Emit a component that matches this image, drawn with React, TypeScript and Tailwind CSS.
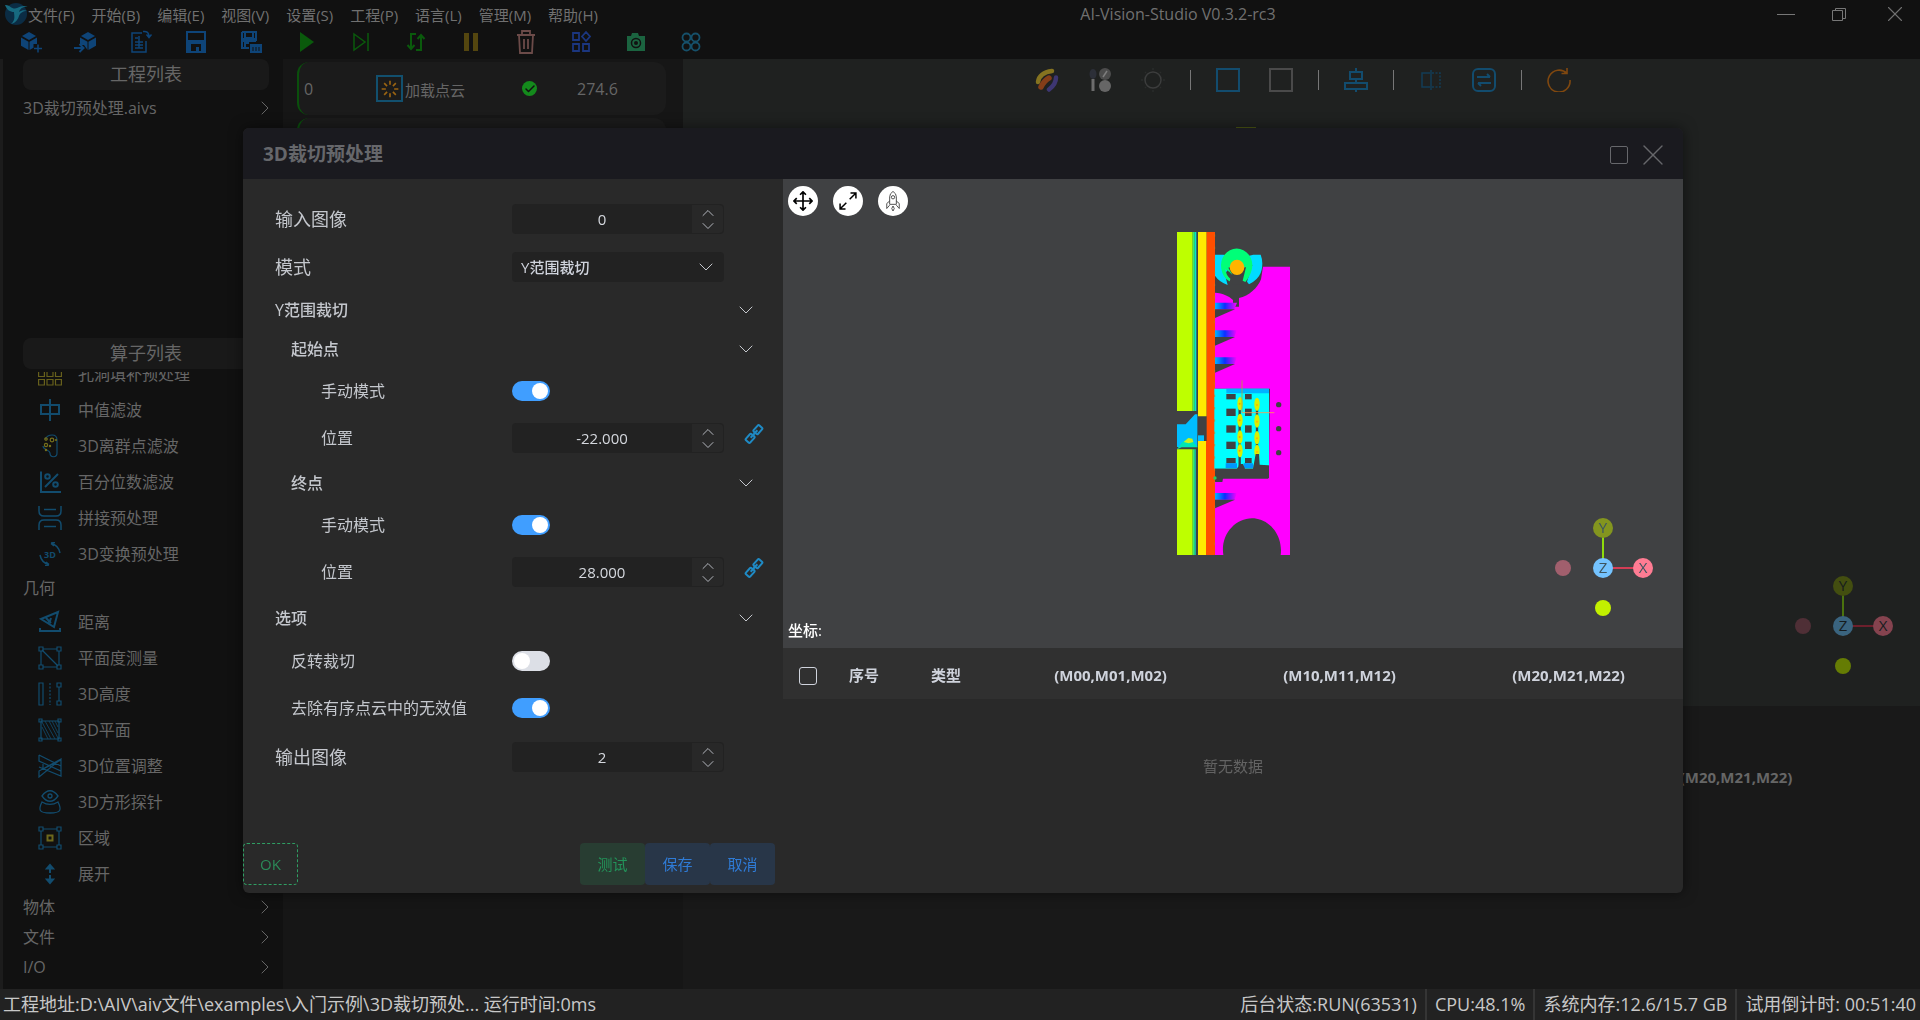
import React, { useState } from "react";
import { ChevronDown, ChevronRight, ChevronUp, Check, X } from "lucide-react";

type IconProps = { children: React.ReactNode; size?: string; color?: string; box?: string; sw?: number };

function Icon({ children, size = "size-6", color = "text-[#124c6e]", box = "0 0 24 24", sw = 1.5 }: IconProps) {
  return (
    <svg viewBox={box} className={`${size} ${color} shrink-0`} fill="none" stroke="currentColor" strokeWidth={sw} aria-hidden="true">
      {children}
    </svg>
  );
}

const menus = ["文件(F)", "开始(B)", "编辑(E)", "视图(V)", "设置(S)", "工程(P)", "语言(L)", "管理(M)", "帮助(H)"];

const blue = "text-[#0e4478]";
const green = "text-[#0a5a0c]";

const tools: { name: string; icon: React.ReactNode }[] = [
  {
    name: "新建工程",
    icon: (
      <Icon color={blue}>
        <path d="M10 2l7 4-7 4-7-4zM2 7.500l7.500 4.300V20L2 15.800zM18 7.500l-7.500 4.300V20l4-2.300V14H18z" fill="currentColor" stroke="none" />
        <path d="M19 14.500v8M15 18.500h8" />
      </Icon>
    ),
  },
  {
    name: "打开工程",
    icon: (
      <Icon color={blue}>
        <path d="M14 2l7 4-7 4-7-4zM22 7.500l-7.500 4.300V20l7.500-4.200zM6 7.500l7.500 4.300V20L10 15H6z" fill="currentColor" stroke="none" />
        <path d="M0 18h9M5.500 14l4 4-4 4" strokeWidth={2} />
      </Icon>
    ),
  },
  {
    name: "最近工程",
    icon: (
      <Icon color={blue}>
        <path d="M13 3H3v19h14V11M6 8h3M6 12h8M6 15h8M6 18h8M10 6v12M14 1.500c4-.500 6 1 6 5M17.500 4.500L20 7.500l2.500-3" />
      </Icon>
    ),
  },
  {
    name: "保存",
    icon: (
      <Icon color={blue} sw={2}>
        <path d="M3 2h18v20H3z" />
        <path d="M3 10h18v4H3zM3 14h4v8H3zM17 14h4v8h-4zM12 17h3v5h-3z" fill="currentColor" stroke="none" />
      </Icon>
    ),
  },
  {
    name: "另存为",
    icon: (
      <Icon color={blue} sw={2}>
        <path d="M3 2h14v9M3 2v16h7M6 2v6h8V2M6 18v-5h4" />
        <path d="M3 8h14v4H3zM11 14h12v9H11z" fill="currentColor" stroke="none" />
        <path d="M14 17v4M17 17v4M20 17v4" stroke="#111111" strokeWidth={1} />
      </Icon>
    ),
  },
  { name: "运行", icon: <Icon color={green}><path d="M6 2l14 10L6 22z" fill="currentColor" stroke="none" /></Icon> },
  { name: "单步", icon: <Icon color={green}><path d="M5 4l11 8-11 8zM19 3v18" /></Icon> },
  {
    name: "循环",
    icon: (
      <Icon color={green} sw={2}>
        <path d="M12 4H7v14M3.500 15L7 19l3.500-4M12 20h5V6M13.500 9L17 5l3.500 4" />
      </Icon>
    ),
  },
  { name: "暂停", icon: <Icon color="text-[#54460f]"><path d="M5 3h5v18H5zM14 3h5v18h-5z" fill="currentColor" stroke="none" /></Icon> },
  {
    name: "删除",
    icon: (
      <Icon color="text-[#6c4b49]" sw={1.8}>
        <path d="M3 5h18M8 5V1h8v4M5 5l1 18h12l1-18M10 9v10M14 9v10" />
      </Icon>
    ),
  },
  {
    name: "模块",
    icon: (
      <Icon color="text-[#1b367f]" sw={1.800}>
        <path d="M4 3h6v7H4zM4 14h6v7H4zM14 14h6v7h-6zM17 2l4 4.500-4 4.500-4-4.500z" />
      </Icon>
    ),
  },
  {
    name: "相机",
    icon: (
      <Icon color="text-[#1b6440]">
        <path d="M3 6h4l1-3h6l1 3h6v15H3z" fill="currentColor" stroke="none" />
        <circle cx="12" cy="13" r="4.500" stroke="#111111" />
        <circle cx="12" cy="13" r="2" fill="#111111" stroke="none" />
      </Icon>
    ),
  },
  {
    name: "布局",
    icon: (
      <Icon color="text-[#16506a]" sw={1.800}>
        <circle cx="7.500" cy="7.500" r="4" />
        <circle cx="16.500" cy="7.500" r="4" />
        <circle cx="7.500" cy="16.500" r="4" />
        <circle cx="16.500" cy="16.500" r="4" />
      </Icon>
    ),
  },
];

const corners = (
  <path d="M1 1h4v4H1zM19 1h4v4h-4zM1 19h4v4H1zM19 19h4v4h-4zM5 3h14M5 21h14M3 5v14M21 5v14" />
);

const filterOps: { name: string; icon: React.ReactNode }[] = [
  {
    name: "孔洞填补预处理",
    icon: (
      <Icon color="text-[#67601c]" sw={1.200}>
        <path d="M.6 1h5.800v5.500H.6zM9 1h6v5.500H9zM17.500 1h5.900v5.500h-5.900zM.6 9h5.800v5.500H.6zM9 9h6v5.500H9zM17.500 9h5.900v5.500h-5.900zM.6 17.500h5.800V23H.6zM9 17.500h6V23H9zM17.500 17.500h5.900V23h-5.900z" />
      </Icon>
    ),
  },
  { name: "中值滤波", icon: <Icon sw={2}><path d="M3 7h18v9H3zM12 1v22" /></Icon> },
  {
    name: "3D离群点滤波",
    icon: (
      <Icon sw={1.200}>
        <path d="M7 5c3-5 12-6 12 1v13c0 5-7 5-7 0 0-3-7-3-7-7" />
        <g className="text-[#75701c]" stroke="currentColor">
          <circle cx="8" cy="5" r="1.200" /><circle cx="14" cy="6" r="1.800" /><circle cx="8" cy="11" r="1.600" />
          <circle cx="12" cy="12" r=".6" /><circle cx="8" cy="16" r=".6" /><circle cx="18" cy="6" r=".5" />
        </g>
      </Icon>
    ),
  },
  {
    name: "百分位数滤波",
    icon: <Icon sw={2}><path d="M3 1.500V22h20M7 17L20 4" /><circle cx="9.500" cy="6.500" r="2.300" /><circle cx="17.500" cy="14.500" r="2.300" /></Icon>,
  },
  { name: "拼接预处理", icon: <Icon><path d="M1 0v5q0 5 5 5h12q5 0 5-5V0M1 24v-5q0-5 5-5h12q5 0 5 5v5M6 3.500h12M6 20.500h12" /></Icon> },
  {
    name: "3D变换预处理",
    icon: (
      <Icon>
        <path d="M22 11C21 6 18 2.500 13 1.500M13 1l4-.500M13 1.500l3 2.500M2 13c1 5 4 8.500 9 9.500M11 23l-4 .5M11 22.500L8 20" />
        <text x="12" y="15.500" textAnchor="middle" fontSize="9" fontWeight="700" fill="currentColor" stroke="none" fontFamily="Open Sans">3D</text>
      </Icon>
    ),
  },
];

const geometryOps: { name: string; icon: React.ReactNode }[] = [
  { name: "距离", icon: <Icon sw={2}><path d="M2 18v3h20v-3M3 9l17-7-4 15zM8 8l5 5M10 12l2-1 1-3" /></Icon> },
  { name: "平面度测量", icon: <Icon sw={1.200}>{corners}<path d="M4 4l16 16" /></Icon> },
  { name: "3D高度", icon: <Icon sw={1.200}><path d="M1 1h4v22H1zM19 1h4v4h-4zM19 19h4v4h-4zM21 5v14" /><path d="M12 1v22" strokeDasharray="2 1.500" /></Icon> },
  {
    name: "3D平面",
    icon: <Icon sw={1.200}><path d="M1 1h3v3H1zM20 1h3v3h-3zM1 20h3v3H1zM20 20h3v3h-3zM3 3h18v18H3z" /><path d="M4 9l6 12M4 4l9 17M7 3l10 18M11 3l9 17M14 3l6 12M17 3l3 6" strokeWidth={0.8} /></Icon>,
  },
  { name: "3D位置调整", icon: <Icon sw={1.200}><path d="M1 1v6l22 10V5L1 23v-6L23 5M1 1l22 11v10L1 13M5 10v5l18-9" /></Icon> },
  {
    name: "3D方形探针",
    icon: <Icon sw={1.300}><path d="M4 6c5-7 11-7 16 0-5 7-11 7-16 0zM4 12c-4 8-3 11 8 11s12-3 8-11c-5 3-11 3-16 0z" /><circle cx="12" cy="6" r="2" /></Icon>,
  },
  { name: "区域", icon: <Icon sw={1.200}>{corners}<path d="M9.500 9.500h5v5h-5z" className="text-[#6e691c]" stroke="currentColor" strokeWidth={2} /></Icon> },
  { name: "展开", icon: <Icon sw={2}><path d="M12 3v8M12 13v8M9 6.500L12 3l3 3.500zM9 17.500l3 3.500 3-3.500z" fill="currentColor" /></Icon> },
];

function OperatorRow({ name, icon }: { name: string; icon: React.ReactNode }) {
  return (
    <li className="flex h-9 shrink-0 items-center pl-[15px]">
      {icon}
      <span className="pl-4">{name}</span>
    </li>
  );
}

function GroupRow({ name, open = false }: { name: string; open?: boolean }) {
  return (
    <li className={open ? "h-8 shrink-0" : "h-[30px] shrink-0"}>
      <button className="flex size-full items-center justify-between pr-1.5">
        {name}
        {!open && <ChevronRight className="size-6" strokeWidth={1} />}
      </button>
    </li>
  );
}

function Sidebar() {
  return (
    <aside className="flex w-[283px] shrink-0 flex-col border-l-[3px] border-[#1c1c1c] bg-[#111111] pl-5 text-[16px] text-[#666666]">
      <section className="h-[279px] shrink-0 pr-3.5">
        <h2 className="flex h-[31px] items-center justify-center rounded-lg bg-[#191919] text-[18px]">工程列表</h2>
        <button className="flex h-9 w-full items-center justify-between">
          3D裁切预处理.aivs
          <ChevronRight className="-mr-2 size-6" strokeWidth={1} />
        </button>
      </section>
      <section className="flex min-h-0 flex-1 flex-col">
        <h2 className="mr-3.5 flex h-[31px] shrink-0 items-center justify-center rounded-lg bg-[#191919] text-[18px]">算子列表</h2>
        <ul className="mt-[3px] flex min-h-0 flex-1 flex-col justify-end overflow-hidden pb-[7px]">
          {filterOps.map((o) => <OperatorRow key={o.name} {...o} />)}
          <GroupRow name="几何" open />
          {geometryOps.map((o) => <OperatorRow key={o.name} {...o} />)}
          <GroupRow name="物体" />
          <GroupRow name="文件" />
          <GroupRow name="I/O" />
        </ul>
      </section>
    </aside>
  );
}

function Workflow() {
  return (
    <section className="flex w-[400px] shrink-0 flex-col gap-[3px] bg-[#161616] pt-[3px] pr-[17px] pl-3.5 text-[#666666]">
      <div className="flex h-[53px] items-center rounded-xl border-l-2 border-[#0a4f0c] bg-[#1b1b1b] pl-[5px] text-[16px]">
        <span className="w-[72px]">0</span>
        <span className="flex size-[27px] items-center justify-center border-2 border-[#12506e]">
          <Icon size="size-5" color="text-[#9a6412]" sw={2}>
            <path d="M12 2v5M12 17v5M2 12h5M17 12h5M5 5l3.500 3.500M15.500 15.500L19 19M19 5l-3.500 3.500M8.500 15.500L5 19" />
          </Icon>
        </span>
        <span className="w-[119px] pt-1 pl-0.5 text-[15px]">加载点云</span>
        <span className="flex size-[15px] items-center justify-center rounded-full bg-[#148a1c]">
          <Check className="size-3 text-[#111111]" strokeWidth={3} />
        </span>
        <span className="pl-10">274.6</span>
      </div>
      <div className="h-[53px] rounded-xl border-l-2 border-[#0a4f0c] bg-[#1b1b1b]" />
    </section>
  );
}

function Gizmo({ dim = false }: { dim?: boolean }) {
  const c = dim
    ? { y: "#434e10", line: "#4b730e", z: "#3a647f", x: "#85434f", xl: "#6d1f2c", n: "#4f2f36", b: "#657c04", t: "#161c1e" }
    : { y: "#83951f", line: "#8fdb0c", z: "#74c3ff", x: "#ff7c93", xl: "#d33d55", n: "#a15f6d", b: "#c3f000", t: "#3d5560" };
  return (
    <svg viewBox="0 0 120 120" className="size-[120px]" fontSize="15" textAnchor="middle" fontFamily="Open Sans" aria-label="坐标轴">
      <path d="M60 60V20" stroke={c.line} strokeWidth="2" />
      <path d="M60 60H100" stroke={c.xl} strokeWidth="2" />
      <circle cx="60" cy="20" r="10" fill={c.y} />
      <circle cx="60" cy="60" r="10" fill={c.z} />
      <circle cx="100" cy="60" r="10" fill={c.x} />
      <circle cx="20" cy="60" r="8" fill={c.n} />
      <circle cx="60" cy="100" r="8" fill={c.b} />
      <g fill={c.t}>
        <text x="60" y="25">Y</text>
        <text x="60" y="65">Z</text>
        <text x="100" y="65">X</text>
      </g>
    </svg>
  );
}

function ViewTools() {
  const sep = <span className="flex w-[22px] justify-center"><span className="h-5 w-px bg-[#777777]" /></span>;
  const cell = "flex w-[53px] justify-center";
  return (
    <div className="flex h-10 items-center justify-center pl-0.5">
      <button className={cell} aria-label="着色">
        <Icon sw={4.500}>
          <path d="M3 14C4 7 9 4 17 3" stroke="#857320" strokeLinecap="round" />
          <path d="M6 19c2-4 4-7 8-9" stroke="#843d18" strokeLinecap="round" strokeWidth={5.500} />
          <path d="M14 21.500c4-3 7-7 7-12" stroke="#3d3672" strokeLinecap="round" />
        </Icon>
      </button>
      <button className={cell} aria-label="材质">
        <Icon>
          <ellipse cx="5" cy="6" rx="3.500" ry="5" fill="#2c2f38" stroke="none" />
          <path d="M5 11v12" stroke="#6c6c6c" strokeWidth={3} />
          <circle cx="17" cy="6" r="6" fill="#4c4c4c" stroke="none" />
          <circle cx="17" cy="18" r="6" fill="#666666" stroke="none" />
          <path d="M15 9l4-6" stroke="#7d7d7d" />
        </Icon>
      </button>
      <button className={cell} aria-label="光照">
        <Icon color="text-[#3c3d3d]">
          <circle cx="12" cy="12" r="8" />
          <path d="M12 0v2M12 22v2M0 12h2M22 12h2M4 4l1 1M19 19l1 1M20 4l-1 1M5 19l-1 1" stroke="#2a2c2b" />
        </Icon>
      </button>
      {sep}
      <button className={cell} aria-label="蓝色边框"><span className="size-6 border-2 border-[#124c6e]" /></button>
      <button className={cell} aria-label="灰色边框"><span className="size-6 border-2 border-[#4a4a4a]" /></button>
      {sep}
      <button className={cell} aria-label="对齐"><Icon sw={2}><path d="M6 4h12v7H6zM1 15h22v6H1zM12 0v4M12 11v4M12 21v3" /></Icon></button>
      {sep}
      <button className={cell} aria-label="镜像">
        <Icon color="text-[#133d55]" sw={1.500}><path d="M11 5H3v14h8M12 2v20" /><path d="M13 5h8v14h-8" strokeDasharray="2 1.500" /></Icon>
      </button>
      <button className={cell} aria-label="参数"><Icon sw={2}><rect x="1" y="1" width="22" height="22" rx="5" /><path d="M5 9h13M15 6l3 3M19 15H6M9 18l-3-3" /></Icon></button>
      {sep}
      <button className={cell} aria-label="重置"><Icon color="text-[#80480f]" sw={1.600}><path d="M20 5.500A11 11 0 1 0 23 12M20 0v5.500h-5.500" /></Icon></button>
    </div>
  );
}

function MatrixTable({ dim = false }: { dim?: boolean }) {
  return (
    <table className={`w-full table-fixed text-[15px] font-bold ${dim ? "text-[#666666]" : "bg-[#303030] text-[#cfd3dc]"}`}>
      <thead>
        <tr className="h-[51px] text-center [&>th]:pt-1">
          <th className="w-[49px]">
            <input
              type="checkbox"
              aria-label="全选"
              className={`mx-auto block size-[18px] appearance-none rounded-[3px] border ${dim ? "border-[#555555]" : "border-[#cfd3dc]"}`}
            />
          </th>
          <th className="w-16">序号</th>
          <th className="w-[100px]">类型</th>
          <th>(M00,M01,M02)</th>
          <th>(M10,M11,M12)</th>
          <th>(M20,M21,M22)</th>
        </tr>
      </thead>
    </table>
  );
}

function Workspace() {
  return (
    <main className="flex min-w-0 flex-1 flex-col bg-[#191919]">
      <div className="relative flex-1 bg-[#1f2120] pt-px">
        <ViewTools />
        <div className="flex justify-center pt-[27px] pr-28"><span className="h-1 w-5 bg-[#4d5714]" /></div>
        <div className="absolute right-[17px] bottom-5"><Gizmo dim /></div>
      </div>
      <div className="h-[283px] pt-11 pr-4"><MatrixTable dim /></div>
    </main>
  );
}

const wedges = [250, 333, 414, 821];
const beads = [553, 603, 653, 694];
const holes = [524, 568, 618, 667, 716];

function PointCloud() {
  return (
    <svg viewBox="48 38 339 969" className="h-[323px] w-[113px]" aria-label="点云">
      <defs>
        <linearGradient id="wedge">
          <stop offset="0" stopColor="#00b4ff" />
          <stop offset=".45" stopColor="#0a30ff" />
          <stop offset="1" stopColor="#ff00ff" />
        </linearGradient>
      </defs>
      <path d="M48 38h47v537H48zM48 690h47v317H48z" fill="#beff00" />
      <path d="M95 38h6v537h-6zM95 690h6v317h-6z" fill="#3cf060" />
      <path d="M101 38h5v537h-5zM101 690h3v317h-3z" fill="#00e6d0" />
      <path d="M111 38h26v553h-26zM111 665h26v342h-26z" fill="#ffea00" />
      <path d="M137 38h25v969h-27V665h2z" fill="#ff4e00" />
      <path d="M48 615h26l28-30h7v98H48z" fill="#00beff" />
      <path d="M48 690l14-20 20-14 12 2 4 12 12 14H62z" fill="#00e6b4" />
      <path d="M68 668l14-12 12 2 3 10-14 4z" fill="#c8f020" />
      <path d="M111 648h18v17h-18z" fill="#00beff" />
      <path d="M162 220c24 2 42 10 54 22v20h18v-26c30-6 56-30 66-56l6-38h81v865h-28c8-60-35-110-86-110s-95 50-86 110h-25V780l24-4h138v-30l3-238H162z" fill="#ff00ff" />
      <path d="M162 106h25l50 10 40-10h22q8 20 3 45-6 28-38 44l-6-8 16-50h-68l-14 30 8 30q-26-10-38-28z" fill="#00dcff" />
      <path d="M181 148a47 50 0 1 1 92 0q-6 24-20 40l-8-4 10-40h-54l14 24q-10-12-22-18 2 18 15 28-1 8-3 8-20-12-24-38z" fill="#00ff78" />
      <path d="M212 166h32l-2 30h-28z" fill="#404143" />
      <ellipse cx="228" cy="144" rx="22" ry="23" fill="#ffb400" />
      {wedges.map((y) => (
        <g key={y}>
          <path d={`M162 ${y}h66l-8 20h-58z`} fill="url(#wedge)" />
          <path d={`M162 ${y + 20}h60L162 ${y + 46}z`} fill="#404143" />
        </g>
      ))}
      <path d="M160 508h164v228l-10 12H160z" fill="#00ffff" />
      <path d="M196 508h128v14H196z" fill="#00b4ff" />
      {holes.map((y) => (
        <g key={y} fill="#404143">
          <rect x="196" y={y} width="28" height={y === 524 || y === 716 ? 16 : 22} />
          <rect x="252" y={y} width="20" height={y === 524 || y === 716 ? 16 : 22} />
        </g>
      ))}
      <path d="M194 732h34v14h-34zM248 732h28v14h-28zM278 736h12v10h-12z" fill="#0096ff" />
      <path d="M236 540v200M288 540v200" stroke="#404143" strokeWidth="7" />
      {beads.map((y) => (
        <g key={y} fill="#d8f000">
          <ellipse cx="237" cy={y} rx="8" ry="20" />
          <ellipse cx="288" cy={y + 2} rx="8" ry="20" />
          <circle cx="236" cy={y} r="3" fill="#ff9600" />
          <circle cx="288" cy={y + 4} r="3" fill="#ffb400" />
        </g>
      ))}
      <path d="M162 748h66l8-14h10l6 14h24l8-44h10l2 32 26 2v40H186l-2 10h-22z" fill="#404143" />
      <circle cx="162" cy="776" r="5" fill="#20d060" />
      <g fill="#404143">
        <circle cx="353" cy="556" r="8" />
        <circle cx="353" cy="628" r="8" />
        <circle cx="353" cy="700" r="8" />
      </g>
      <path d="M243 483v97" stroke="#b4a03c" strokeWidth="2.500" />
      <path d="M243 580h97" stroke="#ff9a50" strokeWidth="2.500" />
      <path d="M161 45v960" stroke="#c87820" strokeWidth="2" strokeDasharray="7 30" />
    </svg>
  );
}

function NumberField({ id, initial }: { id: string; initial: string }) {
  const [value, setValue] = useState(initial);
  const decimals = initial.includes(".") ? 3 : 0;
  const step = (d: number) => setValue((Number(value) + d).toFixed(decimals));
  const spin = "flex h-[13px] items-center justify-center";
  return (
    <div className="flex h-[30px] w-[212px] items-stretch rounded bg-[#222222]">
      <input
        id={id}
        value={value}
        onChange={(e) => setValue(e.target.value)}
        className="w-[180px] bg-transparent text-center text-[15px] font-medium text-[#d5d8de] outline-none"
      />
      <div className="my-px flex w-[31px] flex-col items-center justify-center rounded-r bg-[#282828] text-[#b3b6bd]">
        <button type="button" className={spin} aria-label="增加" onClick={() => step(1)}><ChevronUp className="size-5" strokeWidth={1.200} /></button>
        <button type="button" className={spin} aria-label="减少" onClick={() => step(-1)}><ChevronDown className="size-5" strokeWidth={1.200} /></button>
      </div>
    </div>
  );
}

function Switch({ id, on }: { id: string; on: boolean }) {
  return (
    <input
      id={id}
      type="checkbox"
      role="switch"
      defaultChecked={on}
      className="h-5 w-[38px] appearance-none rounded-full bg-[#dcdfe6] p-0.5 before:block before:size-4 before:rounded-full before:bg-white checked:bg-[#409eff] checked:before:ml-[18px]"
    />
  );
}

function Row({ id, label, height, indent = "pl-8", size = "text-[16px]", children }: {
  id: string; label: string; height: string; indent?: string; size?: string; children: React.ReactNode;
}) {
  return (
    <div className={`flex items-center ${height}`}>
      <label htmlFor={id} className={`w-[269px] shrink-0 ${indent} ${size}`}>{label}</label>
      {children}
    </div>
  );
}

function SectionRow({ label, height, indent = "pl-8" }: { label: string; height: string; indent?: string }) {
  return (
    <button type="button" className={`flex w-full items-center justify-between pr-[25px] text-[16px] font-medium ${height} ${indent}`}>
      {label}
      <ChevronDown className="size-6" strokeWidth={1} />
    </button>
  );
}

function LinkButton() {
  return (
    <button type="button" className="ml-5 pb-2" aria-label="链接变量">
      <Icon size="size-5" color="text-[#1f8ac4]" sw={2.400}>
        <g transform="rotate(-48 12 12)">
          <rect x="0" y="8.500" width="10" height="7" rx="1.500" />
          <rect x="14" y="8.500" width="10" height="7" rx="1.500" />
          <path d="M6 12h12" />
        </g>
      </Icon>
    </button>
  );
}

function CropForm() {
  return (
    <form className="flex w-3/8 shrink-0 flex-col pt-4 text-[#c4c7cd]" onSubmit={(e) => e.preventDefault()}>
      <Row id="input-image" label="输入图像" height="h-12" size="text-[18px]"><NumberField id="input-image" initial="0" /></Row>
      <Row id="mode" label="模式" height="h-12" size="text-[18px]">
        <div className="relative h-[30px] w-[212px]">
          <select id="mode" className="size-full appearance-none rounded bg-[#222222] pl-[9px] text-[15px] font-medium text-[#cfd3dc] outline-none">
            <option>Y范围裁切</option>
          </select>
          <ChevronDown className="pointer-events-none absolute top-[3px] right-1.5 size-6" strokeWidth={1} />
        </div>
      </Row>
      <SectionRow label="Y范围裁切" height="h-[38px]" />
      <SectionRow label="起始点" height="h-10" indent="pl-12" />
      <Row id="start-manual" label="手动模式" height="h-11" indent="pl-[78px]"><Switch id="start-manual" on /></Row>
      <Row id="start-pos" label="位置" height="h-[50px]" indent="pl-[78px]"><NumberField id="start-pos" initial="-22.000" /><LinkButton /></Row>
      <SectionRow label="终点" height="h-10" indent="pl-12" />
      <Row id="end-manual" label="手动模式" height="h-11" indent="pl-[78px]"><Switch id="end-manual" on /></Row>
      <Row id="end-pos" label="位置" height="h-[50px]" indent="pl-[78px]"><NumberField id="end-pos" initial="28.000" /><LinkButton /></Row>
      <SectionRow label="选项" height="h-[42px]" />
      <Row id="invert" label="反转裁切" height="h-11" indent="pl-12"><Switch id="invert" on={false} /></Row>
      <Row id="clean" label="去除有序点云中的无效值" height="h-[50px]" indent="pl-12"><Switch id="clean" on /></Row>
      <Row id="output-image" label="输出图像" height="h-12" size="text-[18px]"><NumberField id="output-image" initial="2" /></Row>
      <div className="mt-auto flex h-[50px] items-start justify-between pr-2 text-[15px]">
        <button className="h-[42px] w-[55px] rounded border border-dashed border-[#2f9e63] text-[#2b8a58]">OK</button>
        <div className="flex">
          <button type="button" className="h-[42px] w-[65px] rounded bg-[#283d32] text-[#23945a]">测试</button>
          <button type="button" className="h-[42px] w-[65px] rounded bg-[#283648] text-[#2f7bd6]">保存</button>
          <button type="button" className="h-[42px] w-[65px] rounded bg-[#283648] text-[#2f7bd6]">取消</button>
        </div>
      </div>
    </form>
  );
}

function CropView() {
  const round = "flex size-[30px] items-center justify-center rounded-full bg-white";
  return (
    <div className="flex min-w-0 flex-1 flex-col">
      <div className="relative h-[469px] bg-[#404143]">
        <div className="absolute top-[7px] left-[5px] flex gap-[15px]">
          <button className={round} aria-label="移动">
            <Icon size="size-5" color="text-black" sw={2}><path d="M12 1v22M1 12h22M8.500 4.500L12 1l3.500 3.500M8.500 19.500L12 23l3.500-3.500M4.500 8.500L1 12l3.500 3.500M19.500 8.500L23 12l-3.500 3.500" /></Icon>
          </button>
          <button className={round} aria-label="适应窗口">
            <Icon size="size-5" color="text-black" sw={1.800}><path d="M14 10l7-7M15 2.500h6.500V9M10 14l-7 7M9 21.500H2.500V15" /></Icon>
          </button>
          <button className={round} aria-label="导航">
            <Icon size="size-5" color="text-[#333333]" sw={1}>
              <path d="M8 16V7q0-4 4-6.500Q16 3 16 7v9zM8 12l-3.500 3v6L8 17M16 12l3.500 3v6L16 17M12 18q-3 3 0 6 3-3 0-6z" />
              <circle cx="12" cy="7.500" r="2" />
            </Icon>
          </button>
        </div>
        <div className="flex justify-center pt-[53px]"><PointCloud /></div>
        <div className="absolute right-5 bottom-5"><Gizmo /></div>
        <span className="absolute bottom-2 left-[5px] text-[15px] leading-5 font-medium text-white">坐标:</span>
      </div>
      <MatrixTable />
      <p className="flex h-[134px] items-center justify-center text-[15px] text-[#636363]">暂无数据</p>
      <div className="h-[60px]" />
    </div>
  );
}

function CropDialog() {
  return (
    <div className="pointer-events-none fixed inset-y-0 -right-[3px] left-[3px] flex items-start justify-center pt-32">
      <div role="dialog" aria-label="3D裁切预处理" className="pointer-events-auto flex w-3/4 flex-col overflow-hidden rounded-md bg-[#292929] shadow-[0_0_14px_rgba(0,0,0,0.5)]">
        <header className="flex h-[51px] items-center justify-between bg-[#1a1a1f] pt-0.5 pr-3 pl-5 text-[#66676b]">
          <h1 className="text-[19px] font-bold">3D裁切预处理</h1>
          <div className="flex items-center gap-[7px]">
            <button className="size-[18px] rounded-xs border border-[#66676b]" aria-label="最大化" />
            <button aria-label="关闭"><X className="size-9" strokeWidth={0.9} /></button>
          </div>
        </header>
        <div className="flex h-[714px]">
          <CropForm />
          <CropView />
        </div>
      </div>
    </div>
  );
}

export default function App() {
  const stat = "flex items-center border-r-2 border-[#353535] px-2";
  return (
    <div className="flex h-screen flex-col overflow-hidden bg-[#111111] font-['Open_Sans','Noto_Sans_CJK_SC',sans-serif]">
      <header className="h-[59px] shrink-0 text-[#707070]">
        <div className="flex h-7 items-center">
          <span className="pl-1">
            <Icon size="size-6" color="text-[#176a80]">
              <circle cx="12" cy="12" r="11" fill="#0b2c44" stroke="none" />
              <path d="M1 3c4-1 7 5 12 3 4-2 8-3 11-1-5-1-8 2-9 5 3-2 6-2 8-1-4 0-7 2-8 5s-3 7-8 8c5-4 3-9 3-12C6 10 3 8 1 3z" fill="currentColor" stroke="none" />
            </Icon>
          </span>
          <nav className="mt-0.5 flex gap-[17px] text-[15px]">
            {menus.map((m) => <button key={m}>{m}</button>)}
          </nav>
          <p className="flex-1 text-center text-[16px]">AI-Vision-Studio V0.3.2-rc3</p>
          <div className="flex h-6 w-[162px] items-center justify-between pr-3 pl-[18px]">
            <button className="flex h-4 w-5 items-center justify-center" aria-label="最小化"><span className="h-px w-[18px] bg-[#777777]" /></button>
            <button aria-label="还原">
              <Icon size="size-4" color="text-[#777777]" box="0 0 16 16" sw={1}><path d="M1.500 4.500h10v10h-10zM4.500 4.500v-2h10v10h-3" /></Icon>
            </button>
            <button aria-label="关闭窗口"><X className="size-[26px]" strokeWidth={1} /></button>
          </div>
        </div>
        <div className="flex h-7 items-center gap-[31px] pl-[19px]">
          {tools.map((t) => <button key={t.name} aria-label={t.name}>{t.icon}</button>)}
        </div>
      </header>
      <div className="flex min-h-0 flex-1">
        <Sidebar />
        <Workflow />
        <Workspace />
      </div>
      <footer className="flex h-[31px] shrink-0 items-stretch justify-between bg-[#222222] pl-[3px] text-[18px] whitespace-nowrap text-[#c8c8c8]">
        <span className="flex items-center">工程地址:D:\AIV\aiv文件\examples\入门示例\3D裁切预处... 运行时间:0ms</span>
        <div className="flex">
          <span className={stat}>后台状态:RUN(63531)</span>
          <span className={stat}>CPU:48.1%</span>
          <span className={stat}>系统内存:12.6/15.7 GB</span>
          <span className="flex items-center px-1 pl-2">试用倒计时: 00:51:40</span>
        </div>
      </footer>
      <CropDialog />
    </div>
  );
}
